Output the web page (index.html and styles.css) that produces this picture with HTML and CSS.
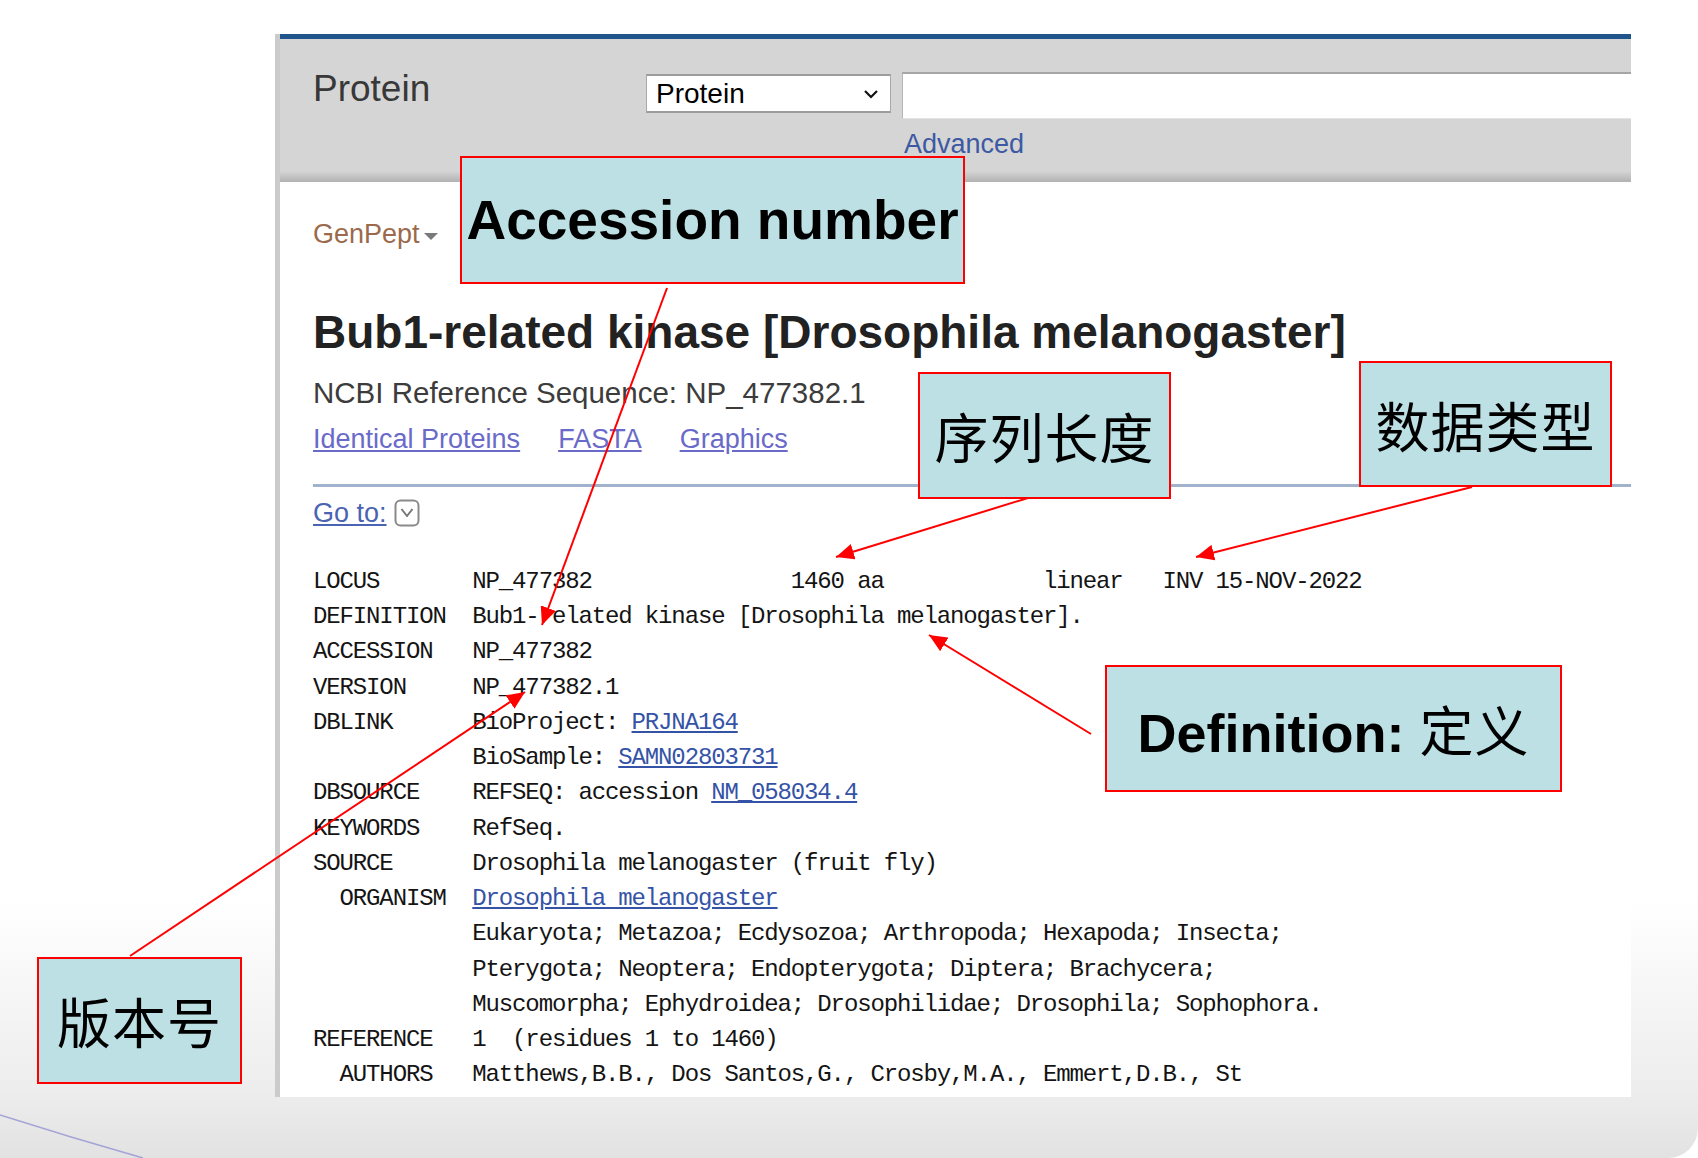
FILE: index.html
```html
<!DOCTYPE html>
<html lang="zh-CN">
<head>
<meta charset="utf-8">
<title>GenPept record annotated</title>
<link rel="stylesheet" href="styles.css">
</head>
<body>
<div class="slide">
  <div class="shot">
    <div class="search">
      <div class="db-label">Protein</div>
      <div class="db-select"><span>Protein</span><svg class="chev" width="16" height="10" viewBox="0 0 16 10"><path d="M2 2 L8 8 L14 2" fill="none" stroke="#111" stroke-width="2.2"/></svg></div>
      <div class="term"></div>
      <a class="advanced">Advanced</a>
    </div>
    <div class="record">
      <div class="format">GenPept<span class="tri"></span></div>
      <h1 class="title">Bub1-related kinase [Drosophila melanogaster]</h1>
      <p class="refseq">NCBI Reference Sequence: NP_477382.1</p>
      <div class="links"><a>Identical Proteins</a><a>FASTA</a><a>Graphics</a></div>
      <div class="rule"></div>
      <div class="goto"><a>Go to:</a><svg width="26" height="28" viewBox="0 0 26 28"><rect x="1.5" y="1.5" width="23" height="25" rx="5" fill="#fff" stroke="#8a8a8a" stroke-width="2"/><path d="M7.5 10 L13 17 L18.5 10" fill="none" stroke="#777" stroke-width="2"/></svg></div>
      <div class="flat">
        <div class="ln">LOCUS       NP_477382               1460 aa            linear   INV 15-NOV-2022</div>
        <div class="ln">DEFINITION  Bub1-related kinase [Drosophila melanogaster].</div>
        <div class="ln">ACCESSION   NP_477382</div>
        <div class="ln">VERSION     NP_477382.1</div>
        <div class="ln">DBLINK      BioProject: <a>PRJNA164</a></div>
        <div class="ln">            BioSample: <a>SAMN02803731</a></div>
        <div class="ln">DBSOURCE    REFSEQ: accession <a>NM_058034.4</a></div>
        <div class="ln">KEYWORDS    RefSeq.</div>
        <div class="ln">SOURCE      Drosophila melanogaster (fruit fly)</div>
        <div class="ln">  ORGANISM  <a>Drosophila melanogaster</a></div>
        <div class="ln">            Eukaryota; Metazoa; Ecdysozoa; Arthropoda; Hexapoda; Insecta;</div>
        <div class="ln">            Pterygota; Neoptera; Endopterygota; Diptera; Brachycera;</div>
        <div class="ln">            Muscomorpha; Ephydroidea; Drosophilidae; Drosophila; Sophophora.</div>
        <div class="ln">REFERENCE   1  (residues 1 to 1460)</div>
        <div class="ln">  AUTHORS   Matthews,B.B., Dos Santos,G., Crosby,M.A., Emmert,D.B., St</div>
      </div>
    </div>
  </div>

  <svg class="arrows" width="1698" height="1158" viewBox="0 0 1698 1158">
    <defs>
      <marker id="ah" markerUnits="userSpaceOnUse" markerWidth="20" markerHeight="16" refX="18" refY="8" orient="auto">
        <path d="M0 0 L18 8 L0 16 Z" fill="#ff0000"/>
      </marker>
    </defs>
    <line x1="667" y1="288" x2="542" y2="625" stroke="#ff0000" stroke-width="2" marker-end="url(#ah)"/>
    <line x1="1028" y1="498" x2="836" y2="557" stroke="#ff0000" stroke-width="2" marker-end="url(#ah)"/>
    <line x1="1472" y1="487" x2="1196" y2="557" stroke="#ff0000" stroke-width="2" marker-end="url(#ah)"/>
    <line x1="1091" y1="734" x2="929" y2="635" stroke="#ff0000" stroke-width="2" marker-end="url(#ah)"/>
    <line x1="130" y1="956" x2="525" y2="692" stroke="#ff0000" stroke-width="2" marker-end="url(#ah)"/>
    <path d="M0 1115 Q72 1138 143 1158" fill="none" stroke="#a3a3d6" stroke-width="1.5"/>
  </svg>

  <div class="note note-acc"><span>Accession number</span></div>
  <div class="note note-len cjk"><span>序列长度</span></div>
  <div class="note note-type cjk"><span>数据类型</span></div>
  <div class="note note-def"><span>Definition: <span class="cjk">定义</span></span></div>
  <div class="note note-ver cjk"><span>版本号</span></div>
</div>
</body>
</html>
```

FILE: styles.css
```css
html, body {
  margin: 0;
  padding: 0;
  background: #ffffff;
}

.slide {
  position: relative;
  width: 1698px;
  height: 1158px;
  box-sizing: border-box;
  padding: 34px 0 0 275px;
  overflow: hidden;
  background: linear-gradient(to bottom, #ffffff 0px, #ffffff 900px, #ededed 1090px, #e2e2e2 1158px);
  border-bottom-right-radius: 30px;
  font-family: "Liberation Sans", Arial, sans-serif;
}

.shot {
  width: 1356px;
  height: 1063px;
  box-sizing: border-box;
  border-left: 5px solid #cbcbcb;
  background: #ffffff;
  overflow: hidden;
}

/* search bar */
.search {
  height: 148px;
  box-sizing: border-box;
  border-top: 5px solid #1f558b;
  padding: 29px 0 0 33px;
  background: linear-gradient(to bottom, #d5d5d5 0px, #d5d5d5 132px, #b2b2b2 143px);
  display: grid;
  grid-template-columns: 333px 256px 1fr;
  grid-template-rows: auto auto;
  align-content: start;
  align-items: start;
}

.db-label {
  margin-top: 1px;
  font-size: 37px;
  line-height: 40px;
  color: #383838;
}

.db-select {
  margin-top: 6px;
  width: 245px;
  height: 39px;
  box-sizing: border-box;
  border: 1px solid #a9a9a9;
  border-top: 2px solid #9c9c9c;
  border-bottom: 2px solid #9c9c9c;
  background: #ffffff;
  display: flex;
  align-items: center;
  padding: 0 11px 0 9px;
  font-size: 28px;
  line-height: 32px;
  color: #000;
}

.db-select .chev {
  margin-left: auto;
}

.term {
  margin-top: 4px;
  height: 47px;
  box-sizing: border-box;
  background: #ffffff;
  border-top: 2px solid #a6a6a6;
  border-left: 1px solid #b6b6b6;
  border-bottom: 1px solid #e4e4e4;
}

.advanced {
  grid-column: 3;
  margin-top: 9px;
  padding-left: 2px;
  font-size: 27px;
  line-height: 32px;
  color: #3d59a3;
}

/* record */
.record {
  padding-left: 33px;
}

.format {
  margin-top: 36px;
  font-size: 27px;
  line-height: 32px;
  color: #9b6a4c;
  display: flex;
  align-items: center;
}

.tri {
  display: inline-block;
  margin: 4px 0 0 4px;
  width: 0;
  height: 0;
  border-left: 7px solid transparent;
  border-right: 7px solid transparent;
  border-top: 7px solid #7a7a7a;
}

.title {
  margin: 56px 0 0;
  font-size: 46px;
  line-height: 52px;
  font-weight: bold;
  color: #222222;
}

.refseq {
  margin: 18px 0 0;
  font-size: 29.5px;
  line-height: 34px;
  color: #3c3c3c;
}

.links {
  margin-top: 13px;
  display: flex;
  gap: 38px;
  font-size: 27px;
  line-height: 32px;
}

.links a {
  color: #6a6ac9;
  text-decoration: underline;
}

.rule {
  margin-top: 29px;
  height: 3px;
  background: #a1b2cc;
}

.goto {
  margin-top: 10px;
  display: flex;
  align-items: center;
  gap: 7px;
  font-size: 27px;
  line-height: 32px;
}

.goto a {
  color: #4a63b2;
  text-decoration: underline;
}

.flat {
  margin-top: 35px;
  font-family: "Liberation Mono", "Courier New", monospace;
  font-size: 24px;
  letter-spacing: -1.13px;
  line-height: 35.24px;
  color: #141414;
}

.ln {
  white-space: pre;
  height: 35.24px;
}

.flat a {
  color: #3553a6;
  text-decoration: underline;
}

/* annotations */
.arrows {
  position: absolute;
  left: 0;
  top: 0;
}

.note {
  position: absolute;
  box-sizing: border-box;
  border: 2px solid #ff0000;
  background: #bce0e4;
  display: flex;
  align-items: center;
  justify-content: center;
  color: #000;
  font-size: 54px;
  font-weight: bold;
  white-space: nowrap;
}

.note-acc {
  font-size: 55px;
}

.cjk {
  font-family: "Noto Sans CJK SC", "Liberation Sans", sans-serif;
  font-weight: normal;
  letter-spacing: 1px;
}

.note-acc { left: 460px; top: 156px; width: 505px; height: 128px; }
.note-len { left: 918px; top: 372px; width: 253px; height: 127px; }
.note-type { left: 1359px; top: 361px; width: 253px; height: 126px; }
.note-def { left: 1105px; top: 665px; width: 457px; height: 127px; }
.note-ver { left: 37px; top: 957px; width: 205px; height: 127px; }
```
